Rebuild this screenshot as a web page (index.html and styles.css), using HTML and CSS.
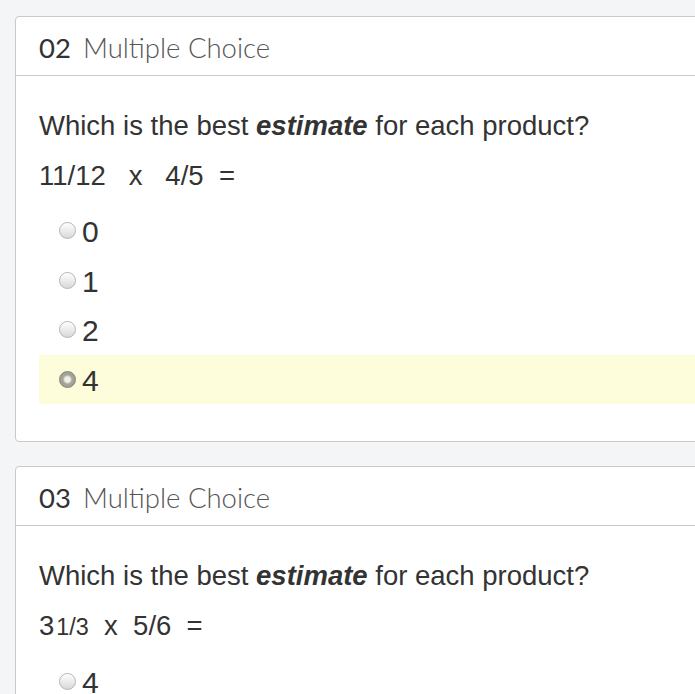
FILE: index.html
```html
<!DOCTYPE html>
<html>
<head>
<meta charset="utf-8">
<link rel="stylesheet" href="styles.css">
</head>
<body>
<div class="page">
  <section class="card">
    <header class="card-head"><span class="num">02</span><span class="kind">Multiple Choice</span></header>
    <div class="card-body">
      <p class="q">Which is the best <b><i>estimate</i></b> for each product?</p>
      <p class="eq">11/12&nbsp;&nbsp;&nbsp;x&nbsp;&nbsp;&nbsp;4/5&nbsp;&nbsp;=</p>
      <ul class="opts">
        <li class="opt"><span class="radio"></span><span class="lbl">0</span></li>
        <li class="opt"><span class="radio"></span><span class="lbl">1</span></li>
        <li class="opt"><span class="radio"></span><span class="lbl">2</span></li>
        <li class="opt sel"><span class="radio on"></span><span class="lbl">4</span></li>
      </ul>
    </div>
  </section>
  <section class="card">
    <header class="card-head"><span class="num">03</span><span class="kind">Multiple Choice</span></header>
    <div class="card-body">
      <p class="q">Which is the best <b><i>estimate</i></b> for each product?</p>
      <p class="eq">3<span class="small">1/3</span>&nbsp;&nbsp;x&nbsp;&nbsp;5/6&nbsp;&nbsp;=</p>
      <ul class="opts">
        <li class="opt"><span class="radio"></span><span class="lbl">4</span></li>
        <li class="opt"><span class="radio"></span><span class="lbl">3</span></li>
      </ul>
    </div>
  </section>
</div>
</body>
</html>
```
FILE: styles.css
```css
html, body {
  margin: 0;
  padding: 0;
  overflow: hidden;
  background: #f4f5f7;
}
.page {
  padding: 16px 0 0 15px;
  display: flex;
  flex-direction: column;
  gap: 24px;
  width: 760px;
}
.card {
  background: #fff;
  border: 1px solid #c9c9c9;
  border-radius: 4px;
}
.card-head {
  height: 59px;
  border-bottom: 1px solid #cacaca;
  padding: 2px 23px 0;
  box-sizing: border-box;
  display: flex;
  align-items: center;
  font-family: Lato, "Open Sans", sans-serif;
  font-size: 27.5px;
  color: #333;
}
.num {
  font-weight: 400;
  margin-right: 12px;
}
.kind {
  font-weight: 300;
  color: #555;
}
.card-body {
  padding: 25px 0 37px 23px;
  font-family: "Liberation Sans", Arial, sans-serif;
  font-size: 27.5px;
  color: #333;
}
.q, .eq {
  margin: 0;
  line-height: 50px;
}
.opts {
  list-style: none;
  margin: 5px 0 0;
  padding: 0;
}
.opt {
  height: 49.5px;
  display: flex;
  align-items: center;
  padding-left: 20px;
  box-sizing: border-box;
}
.opt.sel {
  background: #fdfcdb;
}
.radio {
  width: 17px;
  height: 17px;
  border-radius: 50%;
  border: 1px solid #b5b5b5;
  background: linear-gradient(#ffffff, #d8d8d8);
  margin-right: 6px;
  flex: none;
  box-sizing: border-box;
}
.radio.on {
  border-color: #85857a;
  background: radial-gradient(circle, #f6f6f0 0, #e8e8e0 3px, #a8a89b 4.5px, #94948a 100%);
}
.lbl {
  font-size: 30px;
  line-height: 1;
  margin-top: 3px;
}
.small {
  font-size: 0.85em;
  margin-left: 2px;
}
```
